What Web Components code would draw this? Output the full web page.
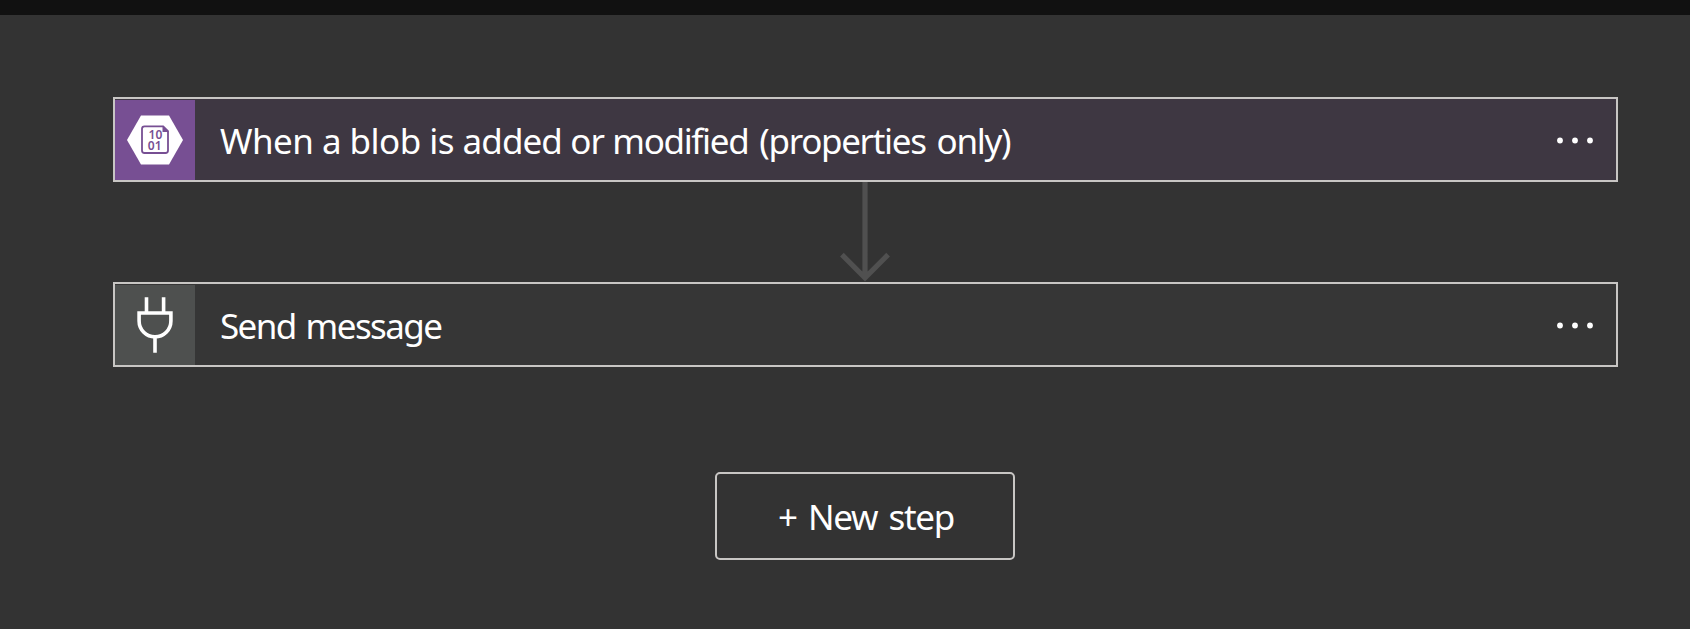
<!DOCTYPE html>
<html lang="en">
<head>
<meta charset="utf-8">
<title>Workflow designer</title>
<style>
html, body { margin: 0; height: 100%; background: #333; overflow: hidden; }
body { font-family: "Noto Sans", "Open Sans", sans-serif; color: #fff; }
.snug { letter-spacing: -0.9px; }
.tight { letter-spacing: -1.33px; word-spacing: 3.2px; }
</style>
</head>
<body>
<flow-designer>
  <flow-card style="--tint:#3e3742;--tile:#774f93;--track:-0.54px">
    <blob-icon slot="icon"></blob-icon>When a blob is <span class="snug">added or </span><span class="tight">modified (properties only)</span>
  </flow-card>
  <flow-arrow></flow-arrow>
  <flow-card style="--tint:#363636;--tile:#4e504f;--track:-1.6px;--gap:2.4px">
    <plug-icon slot="icon"></plug-icon>Send message
  </flow-card>
  <new-step-button>+ New step</new-step-button>
</flow-designer>
<script>
const define = (name, markup) => customElements.define(name, class extends HTMLElement {
  constructor() {
    super();
    this.attachShadow({ mode: 'open' }).innerHTML = markup;
  }
});

define('flow-designer', `
<style>
:host { display: flex; flex-direction: column; align-items: center; box-sizing: border-box;
  height: 629px; border-top: 15px solid #111; padding: 82px 72px 0 113px; background: #333; }
</style><slot></slot>`);

define('flow-card', `
<style>
:host { display: flex; align-items: stretch; box-sizing: border-box; width: 100%; height: 85px; flex: none;
  border: 2px solid #c8c6c4; background: var(--tint); }
.tile { width: 80px; margin-top: 1px; background: var(--tile); flex: none; }
.title { flex: 1; padding-left: 25px; font-size: 35px; line-height: 84px; white-space: nowrap;
  letter-spacing: var(--track); word-spacing: var(--gap, 0); }
svg { display: block; flex: none; align-self: center; margin-right: 20px; }
</style>
<div class="tile"><slot name="icon"></slot></div>
<div class="title"><slot></slot></div>
<svg width="42" height="10" viewBox="0 0 42 10" fill="#fff"><circle cx="6" cy="5.5" r="2.9"/><circle cx="21" cy="5.5" r="2.9"/><circle cx="36" cy="5.5" r="2.9"/></svg>`);

define('blob-icon', `
<style>:host { display: block; } svg { display: block; } text { font: 600 12px "Liberation Sans", "Noto Sans", sans-serif; font-family: "Noto Sans", sans-serif; fill: #774f93; }</style>
<svg width="80" height="80" viewBox="0 0 80 80">
<path d="M26 15.5H54L68 40L54 64.5H26L12 40Z" fill="#fff"/>
<path d="M29.5 26.3H48.2L53 31.1V50.5Q53 53 50.5 53H29.5Q27 53 27 50.5V28.8Q27 26.3 29.5 26.3Z" fill="#fff" stroke="#774f93" stroke-width="1.8"/>
<path d="M47.5 25.8V32H53.8Z" fill="#774f93"/>
<text><tspan x="33.6" y="38.8">10</tspan><tspan x="32.8" y="50">01</tspan></text>
</svg>`);

define('plug-icon', `
<style>:host { display: block; } svg { display: block; }</style>
<svg width="80" height="80" viewBox="0 0 80 80" fill="none" stroke="#fff" stroke-width="3.6">
<path d="M31.5 12.3V28M48.6 12.3V28M24.1 28H55.9V36A15.9 15.9 0 0 1 24.1 36ZM40 52V67.7"/>
</svg>`);

define('flow-arrow', `
<style>:host { display: block; height: 100px; flex: none; margin-right: 1px; } svg { display: block; }</style>
<svg width="50" height="100" viewBox="0 0 50 100" fill="none" stroke="#505050" stroke-width="5.2">
<path d="M25 0V96M1.9 72.7L25 95.8L48.1 72.7"/>
</svg>`);

define('new-step-button', `
<style>
:host { display: block; flex: none; margin: 105px 1px 0 0; }
button { display: block; box-sizing: border-box; width: 300px; height: 88px; padding: 1px 0 0 2px; border: 2px solid #c8c6c4;
  border-radius: 5px; background: transparent; color: inherit; font: inherit; font-size: 35px; line-height: 48px;
  letter-spacing: -1.3px; word-spacing: 3.4px; }
</style><button type="button"><slot></slot></button>`);
</script>
</body>
</html>
